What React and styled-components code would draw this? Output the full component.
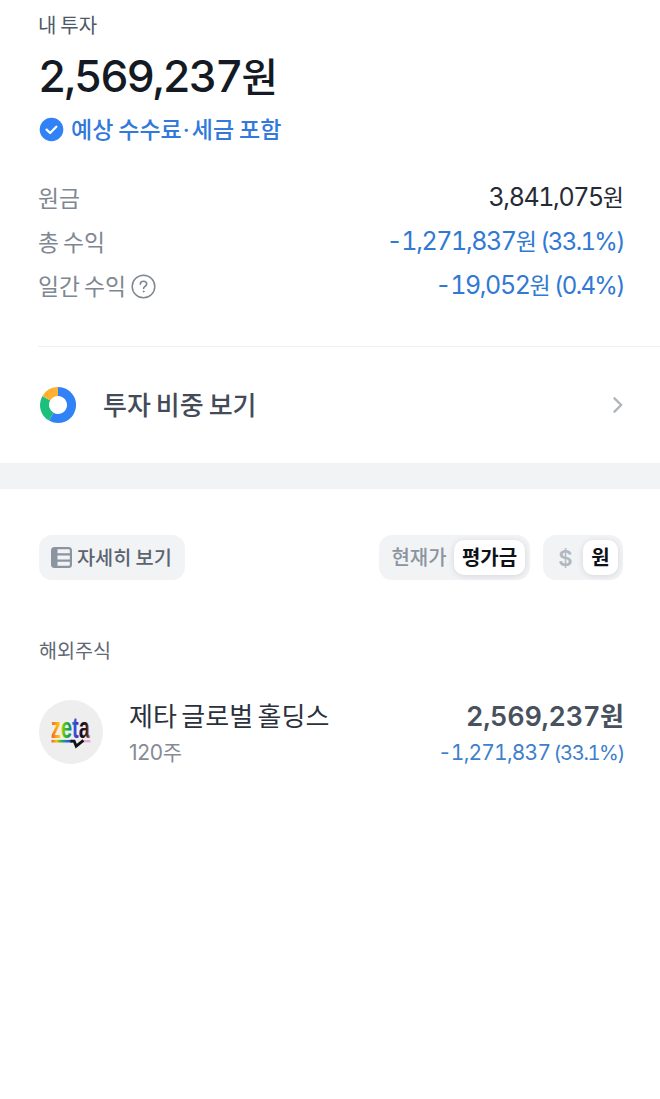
import React from 'react';
import styled, {createGlobalStyle} from 'styled-components'

const GlobalStyle = createGlobalStyle`
  * {
    box-sizing: border-box;
  }
  body {
    margin: 0;
    background-color: #FFFFFF;
    font-family: Inter, "Noto Sans CJK KR", sans-serif;
  }
`

const StyledPage = styled.main`
  width: 660px;
  min-height: 1099px;
  background-color: #FFFFFF;
`

const StyledText = styled.span`
  display: block;
  flex: none;
  white-space: pre;
  font-size: ${({$size}) => $size}px;
  font-weight: ${({$weight}) => $weight || 400};
  line-height: ${({$line}) => $line}px;
  letter-spacing: ${({$spacing}) => $spacing || 0}px;
  word-spacing: ${({$space}) => $space || 0}px;
  font-variant-numeric: ${({$proportional}) => $proportional ? 'normal' : 'tabular-nums'};
  color: ${({$color}) => $color};
`

const StyledUnit = styled.span`
  font-size: ${({$size}) => $size}px;
  font-weight: ${({$weight}) => $weight || 400};
  letter-spacing: 0;
`

const StyledPercent = styled.span`
  margin-right: 0;
  font-size: 0.96em;
  letter-spacing: -0.069em;
`

const StyledDot = styled.span`
  margin: 0 2px 0 1px;
`

const StyledSummary = styled.section`
  padding: 11px 0 0 38px;
`

const StyledNotice = styled.div`
  display: flex;
  align-items: center;
  gap: 7px;
  height: 30px;
  margin: 11px 0 0 1px;

  & > svg {
    flex: none;
  }
  & > span {
    padding-top: 1px;
  }
`

const StyledTotal = styled.div`
  margin-top: 10px;
`

const StyledStats = styled.div`
  margin-top: 31px;
  padding-right: 36px;
`

const StyledStatRow = styled.div`
  display: flex;
  justify-content: space-between;
  align-items: flex-start;
  height: 44px;
  padding-top: 5px;
`

const StyledLabel = styled.div`
  display: flex;
  align-items: center;
  gap: 5px;
  padding-top: 1px;

  & > span {
    padding-top: 1px;
  }
`

const StyledLine = styled.hr`
  height: 1px;
  margin: 39px 0 0;
  border: none;
  background-color: #EFF0F2;
`

const StyledLink = styled.div`
  display: flex;
  align-items: center;
  height: 116px;
  padding: 0 36px 0 39px;

  & > span {
    flex: 1;
    margin-left: 26px;
    padding-top: 2px;
  }
`

const StyledDivider = styled.div`
  height: 26px;
  background-color: #F2F3F5;
`

const StyledToolbar = styled.div`
  display: flex;
  height: 45px;
  margin: 46px 37px 0 39px;
`

const StyledDetailButton = styled.button`
  display: flex;
  align-items: center;
  gap: 5px;
  width: 146px;
  height: 45px;
  margin-right: auto;
  padding: 0 0 0 12px;
  border: none;
  border-radius: 13px;
  font-family: inherit;
  background-color: #F2F3F5;
`

const StyledSegment = styled.div`
  display: flex;
  align-items: center;
  width: ${({$width}) => $width}px;
  height: 45px;
  margin-left: 13px;
  padding: 5px;
  border-radius: 13px;
  background-color: #F2F3F5;
`

const StyledOption = styled.div`
  display: flex;
  justify-content: center;
  align-items: center;
  flex: ${({$active}) => $active ? 'none' : '1'};
  width: ${({$width}) => $width}px;
  height: 35px;
  border-radius: 10px;
  background-color: ${({$active}) => $active ? '#FFFFFF' : 'transparent'};
  box-shadow: ${({$active}) => $active ? '0 1px 6px rgba(0, 20, 50, 0.12)' : 'none'};
`

const StyledHoldings = styled.section`
  padding: 57px 36px 0 39px;
`

const StyledStock = styled.div`
  display: flex;
  align-items: center;
  height: 66px;
  margin-top: 34px;

  & > svg {
    flex: none;
    margin-right: 26px;
  }
`

const StyledNames = styled.div`
  padding-top: 3px;
`

const StyledAmounts = styled.div`
  display: flex;
  flex-direction: column;
  align-items: flex-end;
  margin-left: auto;
  padding-top: 3px;
`

const CheckIcon = () => (
    <svg width="25" height="25" viewBox="0 0 25 25" fill="none">
        <circle cx="12.5" cy="12.5" r="11.8" fill="#3182F6"/>
        <path d="M7.6 12.6l3.5 3.4 6.2-6.2" stroke="#FFFFFF" strokeWidth="2.3" strokeLinecap="round" strokeLinejoin="round"/>
    </svg>
)

const HelpIcon = () => (
    <svg width="25" height="25" viewBox="0 0 25 25" fill="none" stroke="#7F8792" strokeLinecap="round" strokeLinejoin="round">
        <circle cx="12.5" cy="12.5" r="11.3" strokeWidth="1.5"/>
        <path d="M9.3 10.1c.1-1.8 1.4-2.9 3.2-2.9s3.2 1.1 3.2 2.7c0 2.4-3.1 2.3-3.1 4.6" strokeWidth="1.6"/>
        <circle cx="12.6" cy="17.5" r=".5" fill="#7F8792" strokeWidth="1"/>
    </svg>
)

const DonutIcon = () => (
    <svg width="38" height="38" viewBox="0 0 38 38" fill="none" strokeWidth="9">
        <path d="M19 5.5A13.5 13.5 0 1 1 12.25 30.69" stroke="#3182F6"/>
        <path d="M12.25 30.69A13.5 13.5 0 0 1 7.31 12.25" stroke="#1DC07B"/>
        <path d="M7.31 12.25A13.5 13.5 0 0 1 19 5.5" stroke="#FFB134"/>
    </svg>
)

const ChevronIcon = () => (
    <svg width="12" height="18" viewBox="0 0 12 18" fill="none">
        <path d="M2.5 2.3L9.2 9l-6.7 6.7" stroke="#B0B5BC" strokeWidth="2.4" strokeLinecap="round" strokeLinejoin="round"/>
    </svg>
)

const TableIcon = () => (
    <svg width="21" height="21" viewBox="0 0 21 21" fill="none">
        <rect width="21" height="21" rx="3.5" fill="#8B95A1"/>
        <path d="M6.5 2.2h11a1.3 1.3 0 0 1 1.3 1.3v2.7H6.5zM6.5 8.4h12.3v4.2H6.5zM6.5 14.8h12.3v2.7a1.3 1.3 0 0 1-1.3 1.3h-11z" fill="#F2F3F5"/>
    </svg>
)

const ZetaLogo = () => (
    <svg width="64" height="64" viewBox="0 0 64 64">
        <defs>
            <linearGradient id="zeta" gradientUnits="userSpaceOnUse" x1="12" y1="0" x2="52" y2="0">
                <stop offset="0" stopColor="#F0563A"/>
                <stop offset=".13" stopColor="#FFA312"/>
                <stop offset=".24" stopColor="#F6D500"/>
                <stop offset=".32" stopColor="#62C313"/>
                <stop offset=".44" stopColor="#17A33E"/>
                <stop offset=".54" stopColor="#1478D6"/>
                <stop offset=".68" stopColor="#5A1FC0"/>
                <stop offset=".76" stopColor="#150A14"/>
                <stop offset=".9" stopColor="#38201A"/>
                <stop offset="1" stopColor="#EFA6D2"/>
            </linearGradient>
            <linearGradient id="zetaLine" gradientUnits="userSpaceOnUse" x1="12" y1="0" x2="34" y2="0">
                <stop offset="0" stopColor="#F0563A"/>
                <stop offset=".25" stopColor="#F6C400"/>
                <stop offset=".45" stopColor="#35B52C"/>
                <stop offset=".7" stopColor="#1478D6"/>
                <stop offset=".95" stopColor="#6A1FC0"/>
            </linearGradient>
        </defs>
        <circle cx="32" cy="32" r="32" fill="#EEEEEE"/>
        <text
            transform="translate(0 37.6) scale(1 1.45)"
            x="12"
            y="0"
            fontFamily="Liberation Sans, sans-serif"
            fontSize="20"
            fontWeight="700"
            fill="url(#zeta)"
        >zeta</text>
        <path d="M12.5 41.2h21" stroke="url(#zetaLine)" strokeWidth="2.6" fill="none"/>
        <path d="M44 41.2h7.5" stroke="#E9A9D8" strokeWidth="2.4" fill="none"/>
        <path d="M31.5 41.2h3.7l2 5 7.2-5.8" stroke="#111111" strokeWidth="2.8" fill="none"/>
    </svg>
)

const App = () => {
    return (
        <StyledPage>
            <GlobalStyle/>
            <StyledSummary>
                <StyledText $size={20} $line={30} $space={-1.5} $color="#4E5968">내 투자</StyledText>
                <StyledTotal>
                    <StyledText $size={44} $line={50} $weight={500} $spacing={-2.2} $color="#141A24">
                        2,569,237<StyledUnit $size={39.5} $weight={500}>원</StyledUnit>
                    </StyledText>
                </StyledTotal>
                <StyledNotice>
                    <CheckIcon/>
                    <StyledText $size={23} $line={30} $weight={500} $space={-1.2} $color="#3179DB">
                        예상 수수료<StyledDot>·</StyledDot>세금 포함
                    </StyledText>
                </StyledNotice>
                <StyledStats>
                    <StyledStatRow>
                        <StyledLabel>
                            <StyledText $size={22.8} $line={34} $color="#7F8792">원금</StyledText>
                        </StyledLabel>
                        <StyledText $size={25} $line={34} $spacing={-1.4} $color="#252B35">
                            3,841,075<StyledUnit $size={23}>원</StyledUnit>
                        </StyledText>
                    </StyledStatRow>
                    <StyledStatRow>
                        <StyledLabel>
                            <StyledText $size={22.8} $line={34} $space={-2} $color="#7F8792">총 수익</StyledText>
                        </StyledLabel>
                        <StyledText $size={25} $line={34} $spacing={-1.4} $space={-2} $color="#3179D2">
                            -1,271,837<StyledUnit $size={23}>원</StyledUnit> <StyledPercent>(33.1%)</StyledPercent>
                        </StyledText>
                    </StyledStatRow>
                    <StyledStatRow>
                        <StyledLabel>
                            <StyledText $size={22.8} $line={34} $space={-2} $color="#7F8792">일간 수익</StyledText>
                            <HelpIcon/>
                        </StyledLabel>
                        <StyledText $size={25} $line={34} $spacing={-1.4} $space={-2} $color="#3179D2">
                            -19,052<StyledUnit $size={23}>원</StyledUnit> <StyledPercent>(0.4%)</StyledPercent>
                        </StyledText>
                    </StyledStatRow>
                </StyledStats>
                <StyledLine/>
            </StyledSummary>
            <StyledLink>
                <DonutIcon/>
                <StyledText $size={26} $line={38} $weight={500} $space={-2} $color="#434B59">투자 비중 보기</StyledText>
                <ChevronIcon/>
            </StyledLink>
            <StyledDivider/>
            <StyledToolbar>
                <StyledDetailButton>
                    <TableIcon/>
                    <StyledText $size={19.7} $line={30} $weight={500} $space={-1} $color="#5B6471">자세히 보기</StyledText>
                </StyledDetailButton>
                <StyledSegment $width={151}>
                    <StyledOption>
                        <StyledText $size={20} $line={30} $weight={500} $color="#8B95A1">현재가</StyledText>
                    </StyledOption>
                    <StyledOption $active $width={71}>
                        <StyledText $size={20} $line={30} $weight={600} $color="#0D1118">평가금</StyledText>
                    </StyledOption>
                </StyledSegment>
                <StyledSegment $width={80}>
                    <StyledOption>
                        <StyledText $size={22} $line={30} $weight={600} $color="#B0B8C1">$</StyledText>
                    </StyledOption>
                    <StyledOption $active $width={35}>
                        <StyledText $size={20} $line={30} $weight={600} $color="#0D1118">원</StyledText>
                    </StyledOption>
                </StyledSegment>
            </StyledToolbar>
            <StyledHoldings>
                <StyledText $size={19.6} $line={28} $color="#5F6875">해외주식</StyledText>
                <StyledStock>
                    <ZetaLogo/>
                    <StyledNames>
                        <StyledText $size={26} $line={38} $space={-2.5} $color="#2A313D">제타 글로벌 홀딩스</StyledText>
                        <StyledText $size={21} $line={33} $spacing={-0.3} $proportional $color="#858C96">120주</StyledText>
                    </StyledNames>
                    <StyledAmounts>
                        <StyledText $size={27} $line={38} $weight={600} $spacing={-0.3} $color="#48515E">
                            2,569,237<StyledUnit $size={26} $weight={600}>원</StyledUnit>
                        </StyledText>
                        <StyledText $size={21} $line={33} $spacing={-0.8} $space={-1.5} $color="#3F7FCB">
                            -1,271,837 <StyledPercent>(33.1%)</StyledPercent>
                        </StyledText>
                    </StyledAmounts>
                </StyledStock>
            </StyledHoldings>
        </StyledPage>
    );
};

export default App;
